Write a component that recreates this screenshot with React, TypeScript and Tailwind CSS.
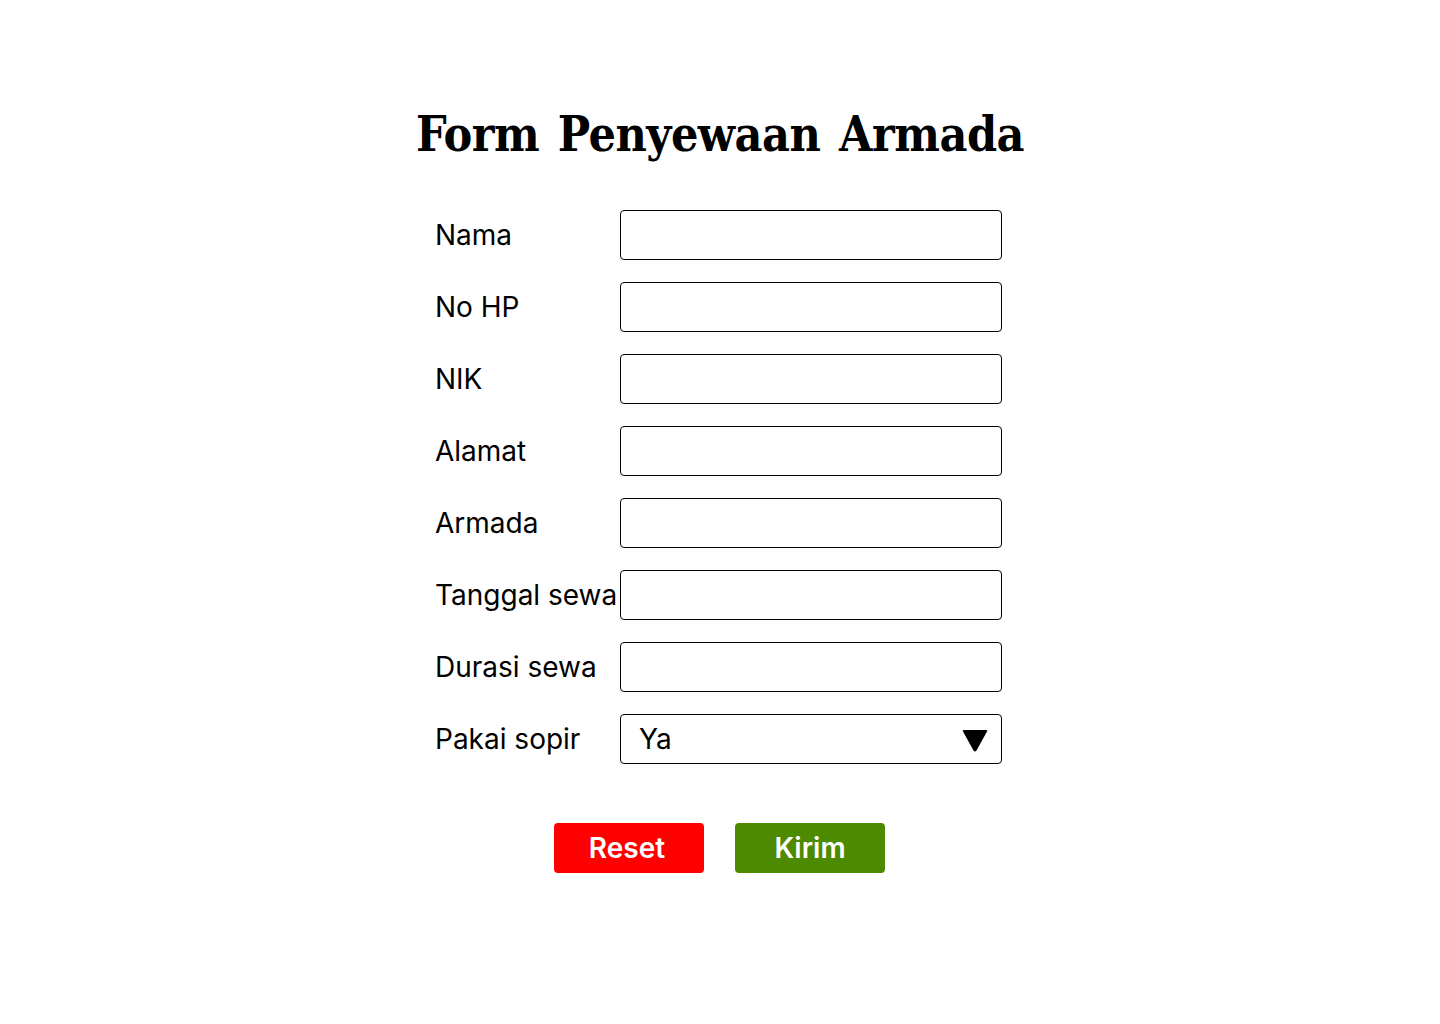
import React, { useState } from "react";

const fields = ["Nama", "No HP", "NIK", "Alamat", "Armada", "Tanggal sewa", "Durasi sewa"];

const App: React.FC = () => {
  const [values, setValues] = useState<Record<string, string>>({});
  const [sopir, setSopir] = useState("Ya");

  const handleReset = () => {
    setValues({});
    setSopir("Ya");
  };

  return (
    <div className="min-h-screen bg-white flex flex-col items-center pt-[104px] font-['Inter',sans-serif] text-black">
      <h1 className="font-['DejaVu_Serif_Condensed','DejaVu_Serif',serif] [font-stretch:condensed] font-bold text-[48px] leading-[60px] tracking-[-0.5px] [word-spacing:4px]">
        Form Penyewaan Armada
      </h1>

      <form
        className="mt-[46px] flex flex-col gap-[22px] ml-[-3px]"
        onSubmit={(e) => e.preventDefault()}
      >
        {fields.map((f) => (
          <div key={f} className="flex items-center">
            <label className="w-[185px] text-[28px] leading-none whitespace-nowrap">{f}</label>
            <input
              type="text"
              value={values[f] ?? ""}
              onChange={(e) => setValues({ ...values, [f]: e.target.value })}
              className="w-[382px] h-[50px] border border-black rounded-[4px] px-4 text-[26px] outline-none"
            />
          </div>
        ))}

        {/* Pakai sopir */}
        <div className="flex items-center">
          <label className="w-[185px] text-[28px] leading-none whitespace-nowrap">Pakai sopir</label>
          <div className="relative w-[382px] h-[50px]">
            <select
              value={sopir}
              onChange={(e) => setSopir(e.target.value)}
              className="appearance-none w-full h-full border border-black rounded-[4px] pl-[18px] text-[28px] bg-white outline-none"
            >
              <option value="Ya">Ya</option>
              <option value="Tidak">Tidak</option>
            </select>
            <svg
              className="absolute right-[13px] top-[15px] pointer-events-none"
              width="28"
              height="24"
              viewBox="0 0 28 24"
            >
              <path d="M2 2.5 Q1 1 3 1 H25 Q27 1 26 2.5 L15.5 21.5 Q14 23.5 12.5 21.5 Z" fill="black" />
            </svg>
          </div>
        </div>

        <div className="flex justify-center gap-[31px] mt-[37px] ml-[2px]">
          <button
            type="button"
            onClick={handleReset}
            className="w-[150px] h-[50px] rounded-[4px] bg-[#ff0000] text-white text-[28px] font-semibold pr-[4px]"
          >
            Reset
          </button>
          <button
            type="submit"
            className="w-[150px] h-[50px] rounded-[4px] bg-[#4e8a00] text-white text-[28px] font-semibold"
          >
            Kirim
          </button>
        </div>
      </form>
    </div>
  );
};

export default App;
